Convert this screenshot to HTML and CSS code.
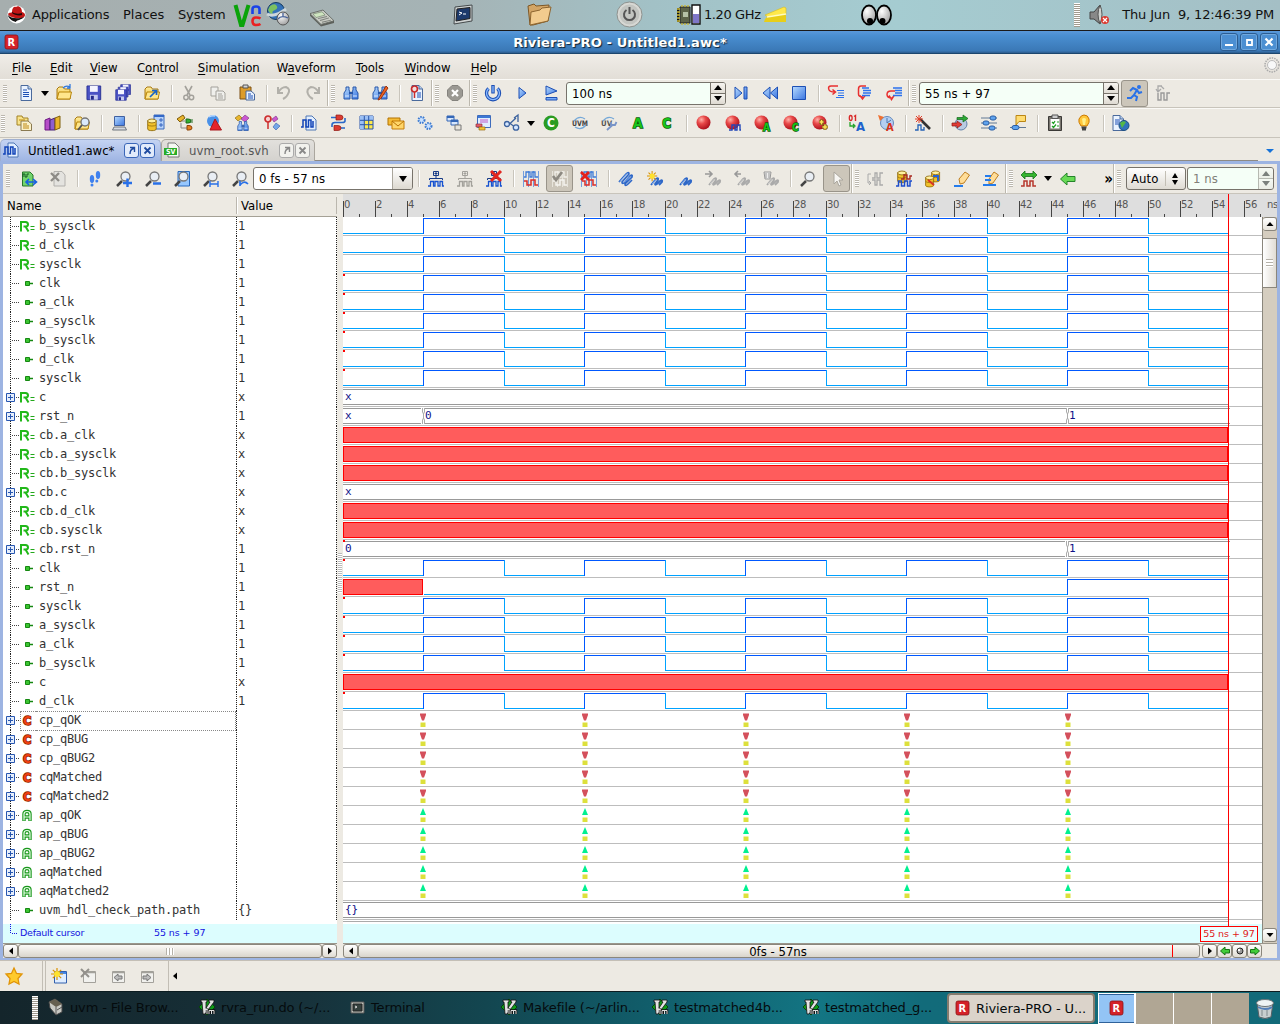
FILE: index.html
```html
<!DOCTYPE html>
<html lang="en">
<head>
<meta charset="utf-8">
<title>Riviera-PRO - Untitled1.awc*</title>
<link rel="stylesheet" href="styles.css">
</head>
<body>
<svg width="0" height="0" class="defs">
  <defs>
    <linearGradient id="gb" x1="0" y1="0" x2="1" y2="1"><stop offset="0" stop-color="#b8dcff"/><stop offset="1" stop-color="#3a75e0"/></linearGradient>
    <linearGradient id="gy" x1="0" y1="0" x2="0" y2="1"><stop offset="0" stop-color="#fff0a0"/><stop offset="1" stop-color="#eeb22c"/></linearGradient>
    <radialGradient id="gr" cx=".35" cy=".3" r=".75"><stop offset="0" stop-color="#ffb0a8"/><stop offset=".4" stop-color="#e84848"/><stop offset="1" stop-color="#a80c18"/></radialGradient>
    <radialGradient id="gw" cx=".35" cy=".3" r=".8"><stop offset="0" stop-color="#fff"/><stop offset="1" stop-color="#999"/></radialGradient>
  </defs>
</svg>
<div class="panel">
  <span class="pic p-hat" data-icon="redhat"></span>
  <span class="p-app">Applications</span><span class="p-places">Places</span><span class="p-sys">System</span>
  <span class="pic p-vnc" data-icon="vnc"></span><span class="pic p-globe" data-icon="globe"></span>
  <span class="pic p-calc" data-icon="calc"></span><span class="pic p-term" data-icon="pterm"></span>
  <span class="pic p-fold" data-icon="pfolder"></span><span class="pic p-power" data-icon="ppower"></span>
  <span class="pic p-chip" data-icon="chip"></span><span class="p-ghz">1.20 GHz</span>
  <span class="pic p-note" data-icon="note"></span><span class="pic p-eyes" data-icon="eyes"></span>
  <span class="p-grip"></span><span class="pic p-spk" data-icon="speaker"></span>
  <span class="p-clock">Thu Jun&nbsp; 9, 12:46:39 PM</span>
</div>
<div class="title">
  <span class="pic t-logo" data-icon="rlogo"></span>
  <span class="t-text">Riviera-PRO - Untitled1.awc*</span>
  <span class="wbtns"><b data-icon="wmin"></b><b data-icon="wmax"></b><b data-icon="wclose"></b></span>
</div>
<nav class="menu">
  <span class="m1"><u>F</u>ile</span><span class="m2"><u>E</u>dit</span><span class="m3"><u>V</u>iew</span><span class="m4">C<u>o</u>ntrol</span><span class="m5"><u>S</u>imulation</span><span class="m6">W<u>a</u>veform</span><span class="m7"><u>T</u>ools</span><span class="m8"><u>W</u>indow</span><span class="m9"><u>H</u>elp</span>
  <i class="gear" data-icon="gear"></i>
</nav>
<div class="tb tb1">
  <span class="icons" data-items="grip new drop open save saveall ofolder | cut copy paste | undo redo group find findrep | bookmark group stop group power play flag"></span>
  <span class="spin s1"><span class="val">100 ns</span><em></em></span>
  <span class="icons" data-items="next rew square | stepin stepover stepout group"></span>
  <span class="spin s2"><span class="val">55 ns + 97</span><em></em></span>
  <span class="icons" data-items="*runner wavesync"></span>
</div>
<div class="tb tb2">
  <span class="icons" data-items="grip docs books fsearch | laptop | dbprops tree shapes hfind hpin | wavedoc plug grid mail gears cascade memo objs drop ccircle uvm uvmw alet clet | ball ballw balla ballc ballp | o1a clocka | wand | goball sliders callout | clip bulb | docglobe"></span>
</div>
<div class="tabs">
  <div class="tab on"><i data-icon="wavedoc"></i><span>Untitled1.awc*</span><b data-icon="detach"></b><b data-icon="tclose"></b></div>
  <div class="tab off"><i data-icon="svdoc"></i><span>uvm_root.svh</span><b data-icon="detach"></b><b data-icon="tclose"></b></div>
  <div class="tabdrop"></div>
</div>
<div class="frame">
  <div class="tb tb3">
    <span class="icons" data-items="grip addwave delwave | feet zin zout zfit zrange zundo"></span>
    <span class="combo"><span>0 fs - 57 ns</span><em></em></span>
    <span class="icons" data-items="| tree1 tree2 tree3 | wavall *wavchk wavdel | clip1 clip2 clip3 clip4 clip5 clip6 | lens *cursor group wavecmp dbwave dbcmp eraser eraser2 group edges drop left"></span>
    <span class="more">»</span><span class="icons grp" data-items="group"></span>
    <span class="auto"><span>Auto</span><em></em></span>
    <span class="spin s3"><span class="val">1 ns</span><em></em></span>
  </div>
  <div class="head"><span class="h-name">Name</span><span class="h-value">Value</span><span class="h-end"></span><div class="ruler" id="ruler"></div></div>
  <div class="body">
    <div class="left"><div class="signals" id="signals"></div>
      <div class="defcur"><span>Default cursor</span><span class="dval">55 ns + 97</span></div>
      <div class="hs"><b data-icon="sl"></b><span class="thumb"><i></i></span><b data-icon="sr"></b></div>
    </div>
    <div class="gutter"><i></i></div>
    <div class="right">
      <div class="wavearea"><div><div class="waves" id="waves"></div><div class="wcur"></div></div>
        <div class="vs"><b data-icon="su"></b><span class="vthumb"><i></i></span><span class="vfill"></span><b data-icon="sd"></b></div>
      </div>
      <div class="hs hs2"><b data-icon="sl"></b><span class="thumb">0fs - 57ns<s></s></span><b class="next" data-icon="sr"></b><b data-icon="gl"></b><b data-icon="dot"></b><b data-icon="grr"></b></div>
      <div class="cursor"></div><div class="curlabel">55 ns + 97</div>
    </div>
  </div>
</div>
<div class="bottom">
  <span class="b1"><i data-icon="star"></i></span>
  <span class="b2"><i data-icon="newwin"></i><i data-icon="delwin"></i><i data-icon="prevwin"></i><i data-icon="nextwin"></i></span>
  <span class="b3" data-icon="sl"></span>
</div>
<div class="task">
  <span class="tgrip"></span>
  <div class="titem"><i data-icon="cabinet"></i>uvm - File Brow...</div>
  <div class="titem"><i data-icon="vim"></i>rvra_run.do (~/...</div>
  <div class="titem"><i data-icon="tterm"></i>Terminal</div>
  <div class="titem"><i data-icon="vim"></i>Makefile (~/arlin...</div>
  <div class="titem"><i data-icon="vim"></i>testmatched4b...</div>
  <div class="titem"><i data-icon="vim"></i>testmatched_g...</div>
  <div class="tact"><i data-icon="rlogo"></i>Riviera-PRO - U...</div>
  <div class="pager"><span><i data-icon="rlogo"></i></span><span></span><span></span><span></span></div>
  <i class="trash" data-icon="trash"></i>
</div>
<script src="app.js"></script>
</body>
</html>
```
FILE: styles.css
```css
*{box-sizing:border-box}
body{margin:0;width:1280px;height:1024px;overflow:hidden;background:#edeae3;font-family:"DejaVu Sans Condensed","DejaVu Sans",sans-serif;font-stretch:condensed;font-size:13px;color:#000}
.defs{position:absolute}
svg{display:block;overflow:visible}
i,em,b{font-style:normal;font-weight:normal}
.panel{height:31px;background:linear-gradient(90deg,#a6aeae 0,#a5b3b5 35%,#a2c1c6 51%,#a5ccd1 70%,#a4bfc5 100%);border-bottom:1px solid #1a1a1a;display:flex;align-items:center;font-family:"DejaVu Sans",sans-serif;font-stretch:normal;font-size:13px;color:#111;white-space:nowrap;padding-bottom:1px}
.panel>span{flex:none}
.p-hat{width:25px;padding-left:7px}.p-app{margin-left:7px;width:91px;letter-spacing:-.18px}.p-places{width:55px}.p-sys{width:56px;letter-spacing:-.15px}
.p-vnc{width:32px}.p-globe{width:44px}.p-calc{width:143px;padding-top:6px}.p-term{width:74px}.p-fold{width:89px}.p-power{width:61px}.p-chip{width:27px}.p-ghz{width:60px;letter-spacing:-.4px}.p-note{width:97px}.p-eyes{width:213px}
.p-grip,.tgrip{width:6px;height:24px;background:repeating-linear-gradient(#fff 0 1px,#a09a8e 1px 2px)}
.p-spk{width:34px;padding-left:9px;margin-right:0}.p-clock{letter-spacing:-.15px;width:160px;text-align:right}
.title{height:23px;background:linear-gradient(#5a98da,#4a8fd2 20%,#3a78b6 90%,#2c5b8c);border-bottom:1px solid #1c466e;display:grid;grid-template-columns:20px 1fr 60px;align-items:center}
.t-logo{padding-left:5px}
.t-text{text-align:center;color:#fff;font:bold 13px "DejaVu Sans",sans-serif;text-shadow:1px 1px 1px #123;letter-spacing:.12px}
.wbtns{display:flex;gap:2px}
.wbtns b{width:18px;height:18px;border:1px solid #2c5d92;border-radius:3px;display:grid;place-items:center;background:#4c8fd2;box-shadow:inset 0 0 0 1px #70a8de}
.menu{height:25px;display:flex;align-items:center;background:linear-gradient(#f0ede8,#e2ded7);padding-left:12px;padding-top:2px}
.menu span{letter-spacing:-.05px}
.menu u{text-underline-offset:2px}
.m1{width:38px}.m2{width:40px}.m3{width:47px}.m4{width:61px}.m5{width:79px}.m6{width:79px}.m7{width:49px}.m8{width:66px}.m9{width:794px}
.gear{margin-top:-6px}
.tb{display:flex;align-items:center;border-top:1px solid #faf9f6;border-bottom:1px solid #c8c4bb;flex:none}
.tb1{height:29px;padding-left:3px;padding-bottom:1px}.tb2{height:30px;padding-left:1px}.tb3{height:30px;padding-left:3px;border-top:0}
.icons{display:flex;align-items:center;align-self:stretch;flex:none}
.ib{width:29px;height:27px;display:grid;place-items:center;flex:none}
.ib.on{width:27px;margin:0 1px;border:1px solid #99948a;border-radius:3px;background:#ccc6ba}
.sep{width:8px;height:17px;border-left:1px solid #c9c5bc;box-shadow:inset 1px 0 #fff;margin-left:5px;margin-right:-5px}
.grip{width:8px;display:flex;flex:none}
.group{width:9px;align-self:stretch;border-left:1px solid #bcb8ae;box-shadow:inset 1px 0 #fff;padding-left:3px;display:flex;align-items:center;flex:none}
.grip:after,.group:after{content:"";width:4px;height:17px;background:repeating-linear-gradient(#bbb7ae 0 1px,#fff 1px 2px)}
.grp{margin-right:4px}
.drop{width:10px;display:grid;place-items:center;flex:none}
.drop:after{content:"";border:4.5px solid transparent;border-top:5px solid #000;border-bottom:0}
.spin,.combo,.auto{height:23px;border:1px solid #77736b;border-radius:3px;background:#f5fff7;display:flex;flex:none;overflow:hidden;letter-spacing:.1px}
.val,.combo>span{flex:1;padding:3px 0 0 5px;line-height:15px}
.spin em{width:15px;border-left:1px solid #77736b;background:linear-gradient(#f6f4ef,#e2ded6 48%,#77736b 48% 52%,#f6f4ef 52%,#dedad2);display:flex;flex-direction:column;justify-content:space-around;align-items:center}
.spin em:before{content:"";border:4px solid transparent;border-bottom:5px solid #000;border-top:0}
.spin em:after{content:"";border:4px solid transparent;border-top:5px solid #000;border-bottom:0}
.s1{width:160px;margin-left:1px}.s2{width:200px;margin:0 1px 0 2px}.s3{width:87px;color:#808078;margin-left:1px}.s3 em{filter:opacity(.5)}
.combo{width:160px;background:#fff;margin:0 0 0 -1px}
.combo em{width:20px;border-left:1px solid #aaa69c;background:linear-gradient(#fff,#ddd9d0);display:grid;place-items:center}
.combo em:after{content:"";border:4.5px solid transparent;border-top:6px solid #000;border-bottom:0}
.auto{width:60px;background:linear-gradient(#fff,#dfdbd3);padding:3px 0 0 4px;line-height:15px}
.auto em{margin-left:6px;border-left:1px solid #c2beb4;padding-left:6px;display:flex;flex-direction:column;gap:2px;justify-content:center;height:15px}
.auto em:before{content:"";border:3.5px solid transparent;border-bottom:5px solid #000;border-top:0}
.auto em:after{content:"";border:3.5px solid transparent;border-top:5px solid #000;border-bottom:0}
.more{width:31px;text-align:right;font-size:15px;font-weight:bold;line-height:20px}
.tabs{height:23px;display:flex;align-items:stretch;padding:1px 0 0 0;background:#edeae3}
.tab{display:flex;align-items:center;border:1px solid #aaa69e;border-bottom:0;border-radius:5px 5px 0 0;flex:none;padding-bottom:1px}
.tab.on{width:161px;background:linear-gradient(#c4d3f2,#9fb5e3);padding-left:2px;border-color:#a0b0d0}
.tab.off{width:154px;background:linear-gradient(#e2e0dc,#d4d2ce);color:#555;padding-left:2px}
.tab span{margin-left:9px;white-space:nowrap}
.tab.on span{width:96px}.tab.off span{width:90px;letter-spacing:.05px}
.tab b{width:15px;height:15px;border:1px solid #3a66b8;border-radius:3px;background:#e2ebfb;display:grid;place-items:center;margin-right:1px;color:#1f4ba0}
.tab.off b{border-color:#aaa;background:#f2f2ee;color:#888;margin-right:1px}
.tabdrop{flex:1;border-bottom:1px solid #8e8a84;margin-right:22px;position:relative}
.tabdrop:after{content:"";position:absolute;right:-16px;top:10px;border:4.5px solid transparent;border-top:4.5px solid #1672d8;border-bottom:0}
.frame{height:799px;border:3px solid #9db4e2;border-left-width:3px;border-bottom-width:2px;display:flex;flex-direction:column;overflow:hidden}
.head{height:23px;display:flex;align-items:center;flex:none;background:#edeae3}
.h-name{width:233px;padding-left:4px}.h-value{width:100px;border-left:1px solid #bbb7ae;padding-left:4px;line-height:17px;box-shadow:inset 1px 0 #fff}.h-end{width:7px;height:17px;border-left:1px solid #bbb7ae}
.ruler{width:934px;height:23px;background:#dedede}
.ruler text{font:10px "DejaVu Sans","DejaVu Sans",sans-serif;font-stretch:normal;fill:#555;letter-spacing:-.4px}
.body{display:flex;flex:1;min-height:0}
.left{width:334px;display:flex;flex-direction:column;background:#fff;flex:none}
.signals{height:707px;font:12px "DejaVu Sans Mono",monospace;letter-spacing:-.22px;color:#333;box-shadow:0 -1px #a5a196}
.sig{height:19px;display:grid;grid-template-columns:17px 16px 200px 101px;background:repeating-linear-gradient(#222 0 1px,#fff 1px 2px) 7px 0/1px 100% no-repeat,repeating-linear-gradient(#222 0 1px,#fff 1px 2px) 233px 0/1px 100% no-repeat,repeating-linear-gradient(#222 0 1px,#fff 1px 2px) 333px 0/1px 100% no-repeat,repeating-linear-gradient(90deg,#444 0 1px,#fff 1px 2px) 9px 9px/7px 1px no-repeat;line-height:19px}
.sig>span:nth-child(3){padding-left:3px}.sig>span:nth-child(4){padding-left:2px}
.sig svg{margin-top:1px}
.sig.sel span:nth-child(2){border:1px dotted #888;border-right:0}.sig.sel span:nth-child(3){border:1px dotted #888;border-left:0;line-height:17px}
.sig.sel span:nth-child(2) svg{margin-top:0;margin-left:-1px}
.defcur{height:19px;background:repeating-linear-gradient(#1414e0 0 1px,#dcfdfe 1px 2px) 7px 0/1px 10px no-repeat,repeating-linear-gradient(90deg,#1414e0 0 1px,#dcfdfe 1px 2px) 7px 9px/8px 1px no-repeat,#dcfdfe;color:#1414e0;font:9.5px/18px "DejaVu Sans",sans-serif;font-stretch:normal;display:flex;padding-left:17px;letter-spacing:-.25px}
.defcur span{width:134px}.defcur .dval{letter-spacing:-.08px}
.hs{height:15px;display:flex;background:#edeae3;border-top:1px solid #9a968c}
.hs b{width:15px;border:1px solid #8a867c;border-radius:3px;background:linear-gradient(#fff,#e0dcd3);display:grid;place-items:center;flex:none}
.hs .thumb{flex:1;border:1px solid #8a867c;border-radius:3px;background:linear-gradient(#fcfaf7,#d9d5cc);display:flex;justify-content:center;align-items:center;line-height:11px;position:relative}
.hs .thumb i{width:8px;height:7px;background:repeating-linear-gradient(90deg,#b5b1a8 0 1px,#fff 1px 3px)}
.gutter{width:6px;background:#edeae3;display:flex;align-items:center;flex:none}
.gutter i{width:4px;height:40px;margin:-30px 0 0 1px;background:repeating-linear-gradient(#bbb 0 1px,#fff 1px 2px)}
.right{width:934px;display:flex;flex-direction:column;position:relative}
.wavearea{height:726px;display:grid;grid-template-columns:919px 15px}
.waves{height:707px;background:#fff;overflow:hidden}
.waves svg{overflow:hidden}
.waves text{font:11px "DejaVu Sans Mono",monospace;fill:#101088}
.wcur{height:19px;background:#dcfdfe}
.vs{display:flex;flex-direction:column;background:#d5cdbf;border-left:1px solid #8a867c;align-items:stretch}
.vs b{height:14px;border:1px solid #8a867c;border-left:0;border-radius:3px;background:linear-gradient(#fff,#e8e4dc);display:grid;place-items:center}
.vs b:last-child{margin-bottom:1px}
.vthumb{height:50px;margin-top:7px;border:1px solid #8a867c;border-left:0;background:linear-gradient(90deg,#fff,#e0dcd4);display:grid;place-items:center}
.vthumb i{width:7px;height:8px;background:repeating-linear-gradient(#b5b1a8 0 1px,#fff 1px 3px)}
.vfill{flex:1}
.hs2{padding-right:15px}
.hs2 .next{margin-left:2px}
.hs2 .thumb{padding-right:2px}
.hs2 .thumb s{position:absolute;left:813px;top:0;width:1px;height:12px;background:#f00}
.cursor{position:absolute;left:885px;top:-23px;width:1px;height:732px;background:#f00}
.curlabel{position:absolute;left:857px;top:709px;width:58px;height:16px;border:1px solid #f00;background:#ecfeff;color:#e01818;font:9.5px/13px "DejaVu Sans",sans-serif;font-stretch:normal;text-align:center;letter-spacing:-.05px}
.bottom{height:31px;display:flex;border-top:1px solid #c4bfb6}
.b1{width:43px;border-right:1px solid #c2beb5;display:flex;align-items:center;padding-left:5px}
.b2{width:124px;margin-left:2px;border-left:1px solid #c2beb5;border-right:1px solid #c2beb5;display:flex;align-items:center;gap:13px;padding-left:5px}
.b3{padding:9px 0 0 0}
.task{height:33px;border-top:1px solid #0c1c20;background:linear-gradient(90deg,#14252b 0,#17323b 24%,#134650 38%,#115c69 50%,#137583 64%,#126b7a 72%,#126a79);display:flex;align-items:center;font:13px "DejaVu Sans",sans-serif;font-stretch:normal;color:#050b0d;white-space:nowrap}
.tgrip{margin-left:32px;margin-right:10px}
.titem{width:151px;display:flex;align-items:center;gap:6px;flex:none;letter-spacing:-.15px;padding-bottom:2px}
.tact{width:148px;height:30px;background:#dbd3ca;border:2px solid #857b6e;border-radius:4px;display:flex;align-items:center;padding-left:7px;gap:7px;flex:none;margin-left:-7px;letter-spacing:-.1px}
.pager{display:flex;gap:1px;margin-left:3px;height:31px;background:#fff}
.pager span{width:37px;background:#b0a694;display:grid;place-items:center}
.pager span:first-child{background:#93c4f5;border:solid #2f629a;border-width:2px 0;outline:1px solid #fff;outline-offset:-1px}
.trash{margin-left:6px}
```
FILE: app.js
```js
// Icon artwork, drawn on a 16 x 16 grid unless a size is given.
const P = (d, f, s, w) => `<path d="${d}" fill="${f || 'none'}"${s ? ` stroke="${s}" stroke-width="${w || 1}"` : ''}/>`;
const T = (x, y, t, c, z, extra) => `<text x="${x}" y="${y}" fill="${c}" font-size="${z}" font-weight="bold" font-family="DejaVu Sans Condensed, DejaVu Sans" ${extra || ''}>${t}</text>`;
const BLUE = '#1c4fb4', GREY = '#a3a19b';
const doc = P('M3 .5H10L13.5 4V15.5H3Z', '#eaf3ff', '#4a6a9c') + P('M10 .5V4H13.5', '#b5cff0', '#4a6a9c');
const lens = (x) => P('M1 15L6 10', 'none', '#444', 2.5) + '<circle cx="9.5" cy="5.5" r="4.5" fill="#e9eef4" stroke="#777" stroke-width="1.3"/>' + (x || '');
const ball = (x) => '<circle cx="7.5" cy="7.5" r="7" fill="url(#gr)"/>' + (x || '');
const wave = (y, c) => P(`M0 ${y + 5}H2.5V${y}H5.5V${y + 5}H8.5V${y}H11.5V${y + 5}H14V${y}H16`, 'none', c, 1.5);
const folder = P('M1 4L3 2H7L8.5 4H14V14H1Z', 'url(#gy)', '#a87810') + P('M1 14L3 7H15.5L14 14Z', '#ffe68c', '#b8860b');
const copyDoc = (c, f) => P('M1 2H8V11H1Z', f, c) + P('M6 6H13L15 8V15H6Z', f, c) + P('M8 9H12M8 11H13M8 13H13', 0, c);
const disk = (x, y, s) => `<g transform="translate(${x} ${y}) scale(${s})">` + P('M1 1H15V15H1Z', '#4a52c4', '#2c3396') + P('M4 1H12V7H4Z', '#f4f4ff') + P('M4 10H12V15H4Z', '#c6caee') + P('M5 11H8V15H5Z', '#23298a') + '</g>';
const bino = (c) => P('M3 2H6V5L7 7V14H1V8L3 5ZM10 2H13V5L15 8V14H9V7L10 5Z', 'url(#gb)', c) + P('M6 8H10', 0, c, 2) + P('M2 11H6M10 11H14', 0, '#dcebff');
const letter = (t, x, y, z) => T(x, y, t, '#19c519', z, 'stroke="#0a5a0a" stroke-width="1.4" paint-order="stroke"');
const db = P('M2 3V13C2 15.5 12 15.5 12 13V3Z', '#f1c22c', '#8a6508') + '<ellipse cx="7" cy="3.5" rx="5" ry="2.3" fill="#fff0a0" stroke="#8a6508"/>' + P('M2 8C3 10 11 10 12 8', 0, '#9a7208');
const treeWave = (c, w, x) => P('M5.5 .5H10.5V4.5H5.5ZM8 4.5V7M1.500 9V7.500H14.500V9M6.5 2.500H9.5M8 1V4', 'none', c) + P('M0 15H2.500V10.500H5.500V15H7V10.500H10V15H12V10.500H14.500V15H16', 0, w || c, 1.3) + (x || '');
const waveGrid = (a, b) => P('M0.500 0V16M15.500 0V16M5.500 0V16M10.500 0V16', 0, a, .7) + P('M1 6H3V1H7V6H9V1H12V6H15', 0, a, 1.3) + P('M1 10H4V14H8V9H12V14H15', 0, b, 1.5);
const clips = (c, f, x) => P('M1 11L8 3Q11 0 11 3L4 11Q4 14 7 11L12 5Q15 3 14 6L7 13Q7 16 10 13L14 9', 0, c, 1.7) + (f ? P('M2 10.500L9 2.500M6 11.500L12 5.500', 0, f, .7) : '') + (x || '');
const smallClip = (c, f) => P('M4 14L9 8Q12 6 11 9L8 13Q8 15 11 12L13 10Q16 8 15 11L12 14', 0, c, 1.8) + P('M5 13L9.500 8', 0, f, .7);
const sunburst = P('M6 0V12M0 6H12M1.8 1.8L10.2 10.2M10.2 1.8L1.8 10.2', 0, '#d99000', 1.2) + '<circle cx="6" cy="6" r="3" fill="#ffe22c"/>';
const win = (c) => P('M3.5 3.5H15.5V14.5H3.5Z', '#f1f1ee', c) + P('M4 4.5H15', 0, c, 1.5);
const X = (x, y, r, c, w) => P(`M${x} ${y}l${r} ${r}M${x + r} ${y}l${-r} ${r}`, 0, c, w);
const cyl = (x, y, c) => P(`M${x} ${y}h6v3h-6z`, c, '#555', .6);

const ICONS = {
  redhat: [19, '<circle cx="9.5" cy="9.5" r="9" fill="#fff"/><path d="M1 9C2 7 5 8 5 7C5 3 7 1 9 2C11 0 15 2 15 7C19 8 19 12 15 13C9 14 2 12 1 9Z" fill="#c11616"/><path d="M1 10C4 14 12 14 17 12C15 15 9 15 9 17C5 16 1 13 1 10Z" fill="#111"/><path d="M5 7C8 9 12 9 15 8V10C12 11 7 10 5 8Z" fill="#220808"/>'],
  vnc: [28, P('M1.500 4L7 24H8.500L14.500 4', 0, '#0aa30a', 4) + P('M18.500 13V8Q18.500 5.500 22 5.500Q25.500 5.500 25.500 8V13', 0, '#1a42e8', 2.6) + P('M26.500 17.500Q25 16.500 22 16.500Q18.500 16.500 18.500 20Q18.500 24 22 24Q25 24 26.500 23', 0, '#ea2222', 2.6)],
  globe: [25, '<circle cx="10" cy="9" r="8.5" fill="#3472b8" stroke="#163a60"/>' + P('M4 4Q8 1 10 3Q13 6 9 8Q5 9 7 13Q3 11 2 8Z', '#7cc060') + P('M1 12Q8 16 20 7', 0, '#cdd6da', 3) + '<ellipse cx="17" cy="16.500" rx="6" ry="6.500" fill="url(#gw)" stroke="#555"/>' + P('M12 17Q15 13 22 16M17 11V15', 0, '#46629a', 1.3)],
  calc: [25, '<g transform="translate(0 1) scale(1 .72)">' + P('M0 5L11 20V23L0 8ZM11 20L24 15V18L11 23Z', '#5d605b') + P('M0 5L13 0L24 15L11 20Z', '#c9cbc4', '#60645e') + P('M3 5.500L12 2.500L15 7L6 10.500Z', '#cfe5c0', '#768870', .8) + P('M8 12L17 9M10 14.500L19 11M12 17L21 14', 0, '#7d817b', 1.300) + '</g>', 18],
  pterm: [20, P('M2 2L19 0V16L1 19Z', '#cfd3d3', '#454a4c') + P('M4 4L17 2.500V13.500L3 16Z', '#1d3a6c', '#222') + P('M6 7L9 8L6 10M10 9H13', 0, '#fff')],
  pfolder: [24, P('M1 3L7 1L9 3L22 2L21 18L6 22H3Z', '#d3a566', '#7d5726') + P('M3 22L4 9L13 7L15 5L24 4L21 18Z', '#f2cb8e', '#8d6530')],
  ppower: [27, '<circle cx="13.500" cy="13.500" r="12.500" fill="#d7d8d4" stroke="#8e928f"/><circle cx="13.500" cy="13.500" r="10" fill="#c3c5c1"/>' + P('M10.500 9A5.500 5.500 0 1 0 16.500 9M13.500 6V13', 0, '#555', 2)],
  chip: [24, P('M3 3H13V19H3Z', '#5d6348', '#222') + P('M1 4V18', 0, '#111', 2) + P('M0 5H3M0 8H3M0 11H3M0 14H3M0 17H3M5 1V3M8 1V3M11 1V3M5 19V21M8 19V21M11 19V21', 0, '#c9b52e', 1.3) + P('M6 8H11V13H6Z', '#b6c1a5') + P('M15 1H23V20H15Z', '#fff', '#111', 1.4) + P('M16 10H22V19H16Z', '#7e76c8'), 21],
  note: [24, P('M1 12L4 9L22 7V15H0Z', '#e8ce18') + P('M1 8L20 0L22 1V7L4 10Z', '#ffe84a', '#d8bc18', .6) + P('M3 10L22 7', 0, '#fffcc0', 1.3), 16],
  eyes: [31, '<ellipse cx="8" cy="10" rx="7" ry="9.500" fill="url(#gw)" stroke="#000" stroke-width="1.8"/><ellipse cx="23" cy="10" rx="7" ry="9.500" fill="url(#gw)" stroke="#000" stroke-width="1.800"/><circle cx="9" cy="16" r="3" fill="#000"/><circle cx="21.500" cy="16" r="3" fill="#000"/>', 20],
  speaker: [20, P('M1 7H5L11 0V19L5 14H1Z', '#888', '#444') + P('M11 0Q15 9 11 19Q7 9 11 0', '#cfd2cf', '#555') + '<circle cx="16" cy="15" r="4" fill="#dc3a30"/>' + X(14, 13, 4, '#fff', 1.2)],
  rlogo: [13, '<rect width="13" height="14" rx="2" fill="#d42229" stroke="#8c1418" stroke-width=".8"/>' + T(2.5, 11, 'R', '#fff', 11), 14],
  wmin: [10, P('M1 8H9', 0, '#fff', 2)], wmax: [10, P('M3 3H8V8H3Z', 0, '#fff', 1.8)], wclose: [10, X(1.5, 1.5, 7, '#fff', 2.2)],
  gear: [16, '<circle cx="8" cy="8" r="7" fill="none" stroke="#aaa" stroke-width="1.5" stroke-dasharray="1.5 1"/><circle cx="8" cy="8" r="4.500" fill="#f8f8f8" stroke="#bbb"/>'],
  new: [16, doc + P('M5 5H9M5 7.500H11M5 9.500H11M5 11.500H11', 0, BLUE)],
  open: [17, folder + P('M7 3Q10 0 14 2M14 -1V3H11', 0, '#3078dd', 1.3)],
  save: [16, disk(0, 0, .98)],
  saveall: [16, disk(5, -1, .7) + disk(2.5, 1.500, .7) + disk(0, 4, .75)],
  ofolder: [16, folder + P('M6 12L12 6M8 5.500H12.500V10', 0, '#1964c8', 1.7)],
  cut: [16, P('M4 1L9 10M11 1L6 10', 0, GREY, 1.6) + '<circle cx="5" cy="12.500" r="2.200" fill="none" stroke="#a3a19b" stroke-width="1.500"/><circle cx="10.500" cy="12.500" r="2.200" fill="none" stroke="#a3a19b" stroke-width="1.500"/>'],
  copy: [16, copyDoc(GREY, '#efefec')],
  paste: [16, P('M1 2H12V14H1Z', '#dd9c2b', '#7c5014') + P('M4 0H9V3H4Z', '#d5d5d5', '#555') + P('M7 6H12L15.500 9V15H7Z', '#e8f2ff', '#47679b') + P('M9 9H12M9 11H14M9 13H14', 0, BLUE)],
  undo: [16, P('M2 2V8H7M2 8Q5 2 10 2Q15 4 12 9Q11 12 7 14', 0, '#b2b0aa', 2)],
  redo: [16, P('M14 2V8H9M14 8Q11 2 6 2Q1 4 3 9Q4 12 8 14', 0, '#b2b0aa', 2)],
  find: [16, bino('#2857a8')],
  findrep: [16, bino('#2857a8') + P('M14 1L7 13L6 15L8.500 14L16 3Z', '#ee6420', '#9c320c')],
  bookmark: [16, doc + P('M8 8H12M8 10H12M8 12H12', 0, BLUE) + '<circle cx="5.500" cy="4" r="3" fill="#f0dede" stroke="#c92b2b" stroke-width="1.700"/>' + P('M5.500 7V13', 0, '#c92b2b', 1.5)],
  stop: [16, P('M5 .5H11L15.500 5V11L11 15.500H5L.5 11V5Z', '#9b9993', '#85837e') + X(5, 5, 6, '#fff', 2.2)],
  power: [16, P('M3.500 3.500A6.500 6.500 0 1 0 12.500 3.500M8 0V8.500', 0, BLUE, 3.4) + P('M3.500 3.500A6.500 6.500 0 1 0 12.500 3.500M8 1V7.500', 0, '#8abaff', 1.3)],
  play: [16, P('M5 2.500L12 8L5 13.500Z', 'url(#gb)', BLUE)],
  flag: [16, P('M3 1L14 6L3 10Z', 'url(#gb)', BLUE) + P('M3 12.500H14V15H3Z', '#75aaf8', BLUE)],
  next: [16, P('M2 2L9 8L2 14ZM11 2H14V14H11Z', 'url(#gb)', BLUE)],
  rew: [16, P('M8 2V14L1 8ZM15.500 2V14L8.500 8Z', 'url(#gb)', BLUE)],
  square: [16, P('M1.500 1.500H14.500V14.500H1.500Z', 'url(#gb)', BLUE)],
  stepin: [16, P('M10 1H3Q0 1 .7 4Q1 7 7 7M4.500 4.500L7.500 7L4.500 9.500', 0, '#e83030', 1.5) + P('M9 5.500H16M10 8H16M10 10.500H16M8 12.500H16', 0, '#2b72ee', 1.2)],
  stepover: [16, P('M9 1H4Q1.500 1 1.500 4V9Q1.500 12 6 12M3 10.500L5.500 14L8 10.500', 0, '#e83030', 1.5) + P('M5 3H12M6 5.500H14M6 8H14M5 10.500H13', 0, '#2b72ee', 1.3)],
  stepout: [16, P('M9 6H5Q1 6 1 9.500Q1 13 6 13M3 10.500L5.500 14.500L8 10.500', 0, '#e83030', 1.5) + P('M7 3H16M9 5.500H16M9 8H16M7 10.500H16', 0, '#2b72ee', 1.3)],
  runner: [16, '<circle cx="12" cy="2" r="2" fill="#2a72e8"/>' + P('M3 6L6 3L10 5L7 10L10 12L9 16M7 10L4 13L0 13M10 5L12 8L15 7', 0, '#2a72e8', 2)],
  wavesync: [16, P('M6 1H2V6M0 4L2 7L5 4M5 1L8 4', 0, '#aaa', 1.3) + P('M2 8V15H5V8H8V15H11V8H14', 0, '#999', 1.4)],
  docs: [16, P('M1 1H6L7 3H12V10H1Z', '#f8e38a', '#a28224') + P('M6 6H12L15.500 9V15.500H5V6Z', '#fbf1c8', '#8a7a52') + P('M3 5H9M7 9H11M7 11H13M7 13H13', 0, '#bd8713')],
  books: [16, P('M0 5L5 3V15H0Z', '#b64dc8', '#6c1882') + P('M5 5L10 3V15H5Z', '#8d5fd0', '#492078') + P('M10 3L15 1V13L10 15Z', '#e8b52d', '#80610c')],
  fsearch: [16, folder + '<circle cx="11" cy="7" r="4" fill="#dbeafc" stroke="#777" stroke-width="1.400"/>' + P('M8 10L4 15', 0, '#555', 2)],
  laptop: [16, P('M3.500 1.500H13.500V10.500H3.500Z', 'url(#gb)', '#4060a0') + P('M3 12H14L15.500 15H1.500Z', '#d6dae2', '#70767e')],
  dbprops: [16, P('M6 0H16V14H6Z', '#b9d4fa', '#3d6abb') + P('M6 1H16', 0, '#3268c8', 2) + P('M12 4H14V6H12ZM12 9H14V11H12Z', 0, BLUE, .8) + `<g transform="translate(-2 3) scale(.85)">${db}</g>`],
  tree: [16, P('M4 8V13H10M4 6H8', 0, '#888') + P('M0 4L6 0L8 3L3 7Z', '#e8b52d', '#805c0c') + P('M9 4H11Q14 4 14 6Q14 8 11 8H9Z', '#30b030', '#1c6a1c') + P('M10 10.500H12Q15 10.500 15 13Q15 15 12 15H10Z', '#e88020', '#8c4408') + P('M13 5H16M13 7H16', 0, '#287028')],
  shapes: [16, '<circle cx="7" cy="6" r="6" fill="#4a91e8"/>' + P('M9 4L15.500 15H4Z', '#e5232c', '#ab161c') + P('M3 2Q6 0 9 1', 0, '#b8d8ff', 1.5)],
  hfind: [16, P('M0 3L4 0L7 3L3 6Z', '#e8b52d', '#80610c', .6) + P('M6 4L10 0L14 3L10 7Z', '#cb58d1', '#783080', .6) + `<g transform="translate(2 5) scale(.75)">${bino('#2857a8')}</g>`],
  hpin: [16, '<circle cx="4" cy="4" r="3" fill="#f7d0d0" stroke="#cc2d2d" stroke-width="1.700"/>' + P('M4 7V14', 0, '#cc2d2d', 1.5) + P('M8 4L12 1L14 4L10 7Z', '#cb58d1', '#783080', .6) + P('M9 12L12 8L16 11L12 15Z', '#75a7e8', '#355da8', .6)],
  wavedoc: [16, P('M5 1H11L15 5V15H5Z', '#e3efff', '#4f77b4') + P('M0 12H2V5H5V12H7.500V5H10V12H12V6', 0, '#1244b8', 1.5)],
  plug: [16, P('M1 2.500H9M15 3V6Q15 7.500 12 7.500H5Q2 7.500 2 10V12M11 13H15', 0, '#2968c8', 1.6) + P('M6 0H10Q13 0 13 2.500Q13 5 10 5H6Z', '#db3b32', '#8f1711', .7) + P('M4 10.500H8Q11 10.500 11 13Q11 15.500 8 15.500H4Z', '#db3b32', '#8f1711', .7)],
  grid: [16, P('M1 1H14V14H1Z', '#ffe94a', '#2855aa') + P('M1 1H5V14H1ZM5 1H14V5H5Z', '#9cc0f4') + P('M5.300 1V14M9.700 1V14M1 5.300H14M1 9.700H14', 0, '#2855aa')],
  mail: [16, P('M0 3H12V10H0Z', '#f5bc38', '#b37200') + P('M4 6H16V14H4Z', '#ffd66a', '#c57d08') + P('M4 6L10 11L16 6', 0, '#b97304')],
  gears: [16, '<circle cx="4.500" cy="5" r="3" fill="#c9e1ff" stroke="#3c7ad0" stroke-width="2" stroke-dasharray="1.500 1"/><circle cx="11.500" cy="11" r="3" fill="#c9e1ff" stroke="#3c7ad0" stroke-width="2" stroke-dasharray="1.500 1"/>'],
  cascade: [16, P('M1 1H8V6H1Z', '#d8e7fc', '#3467b7') + P('M5 5H12V10H5Z', '#d8e7fc', '#3467b7') + P('M9 10H15V15H9Z', '#e7e4dc', '#777') + P('M1 2H8M5 6H12', 0, '#3467b7', 2)],
  memo: [16, P('M2.500 .5H15.500V12.500H2.500Z', '#dfedff', '#3e6cbc') + P('M3 2H15', 0, '#3d77d5', 2) + P('M5 5H13M5 7H13', 0, '#c05bc6') + P('M1 9H7V12H1Z', '#e55b68', '#8c3040', .7) + P('M4 12H10V15H4Z', '#f5c332', '#986c10', .7)],
  objs: [16, '<circle cx="3" cy="9" r="2.500" fill="#d5e7ff" stroke="#3c629e" stroke-width="1.300"/><circle cx="12" cy="12.500" r="2.700" fill="#d5e7ff" stroke="#3c629e" stroke-width="1.300"/>' + P('M5 8Q7 9 9.500 11M5.500 9L12 3M10 3L14 0V7', 0, '#3c629e', 1.3)],
  ccircle: [16, '<circle cx="8" cy="8" r="7.500" fill="#2b9c22"/>' + T(4, 12.3, 'C', '#fff', 12)],
  uvm: [16, P('M2 6Q7 0 13 4M14 10Q9 16 3 12', 0, '#75a8d8', 1.3) + T(0, 11, 'UVM', '#444', 7.5, 'textLength="16" lengthAdjust="spacingAndGlyphs"')],
  uvmw: [16, P('M2 6Q7 0 13 4', 0, '#75a8d8', 1.3) + T(0, 11, 'UV', '#555', 7.5, 'textLength="11" lengthAdjust="spacingAndGlyphs"') + P('M6 15L12 9.500M10 7V10H14L15.500 7', 0, '#7894c8', 1.8)],
  alet: [16, letter('A', 3, 13, 14)], clet: [16, letter('C', 3.2, 13, 13.5)],
  ball: [16, ball()], ballw: [16, ball(P('M4 15H7V10H10V15H12V10H15V15H16', 0, '#2146b8', 1.4))],
  balla: [16, ball(letter('A', 9, 16, 10))], ballc: [16, ball(letter('C', 9, 16, 10))],
  ballp: [16, ball(P('M7 7H12M9.500 4.500V10M10 12H16M13 9V15', 0, '#7c5a10', 3) + P('M7.500 7H11.500M9.500 5V9.500M10.500 12H15.500M13 9.500V14.500', 0, '#ffe45a', 1.5))],
  o1a: [16, '<ellipse cx="1.700" cy="3" rx="1.400" ry="2.500" fill="none" stroke="#d92828" stroke-width="1.300"/>' + P('M5 1.500L6.500 .5V6', 0, '#d92828', 1.4) + P('M1 7V11H5M4 9L6 11L4 13', 0, '#25a22a', 1.3) + T(7, 15.500, 'A', '#2062cd', 13)],
  clocka: [16, '<circle cx="9" cy="8" r="6.500" fill="#b4cff2" stroke="#6388bb"/>' + P('M9 3V8L13 5', 0, '#4b75b0') + P('M0 0L6 2L2 6Z', '#ee7031') + T(8, 16, 'A', '#d83018', 11)],
  wand: [16, P('M5 4L15 14', 0, '#333', 2.6) + P('M4 0V8M0 4H8M1 1L7 7M7 1L1 7', 0, '#e23e28') + P('M0 15H3V10H6V15H9V12', 0, '#2462b5', 1.3)],
  goball: [16, '<circle cx="9" cy="9" r="6" fill="#b9cae2" stroke="#6382aa"/>' + P('M5 2.500H11V0L16 3.500L11 7V4.500H5Z', '#2daa35', '#176a1d', .7) + P('M0 8H5V6L10 9.500L5 13V11H0Z', '#e13d38', '#8c1715', .7)],
  sliders: [16, P('M0 3H16M0 8H16M0 13H16', 0, '#607894') + '<rect x="9" y="1" width="6" height="4" rx="2" fill="#5fa3ee" stroke="#2a5ea5"/><rect x="2" y="6" width="6" height="4" rx="2" fill="#5fa3ee" stroke="#2a5ea5"/><rect x="8" y="11" width="6" height="4" rx="2" fill="#5fa3ee" stroke="#2a5ea5"/>'],
  callout: [16, P('M6 .5H15.500V6.500H9L6 10Z', '#ffdc71', '#bb8615') + P('M0 12.500H16', 0, '#607894') + '<rect x="2" y="10.500" width="7" height="4" rx="2" fill="#5fa3ee" stroke="#2a5ea5"/>'],
  clip: [16, P('M1.500 1.500H14.500V15.500H1.500Z', '#77736c', '#3b3936') + P('M3.500 4H12.500V13.500H3.500Z', '#fff') + P('M5 0H11V3.500H5Z', '#ccc', '#555') + P('M5 7L6.500 8.500L8 6M5 11L6.500 12.500L9 9.500M10 7H12M10 11H12', 0, '#20a025', 1.2)],
  bulb: [16, P('M5 11Q2 7 3 4Q5 0 8 0Q12 0 13 4Q14 7 11 11Z', '#ffc73b', '#cb7900') + P('M6 4Q8 2 10 4L9 10H7Z', '#fff08a') + P('M5.500 12.500H10.500M6 14.500H10', 0, '#444', 2)],
  docglobe: [16, `<g transform="translate(-3 0)">${doc}</g>` + P('M2 5H7M2 7H7M2 9H6', 0, BLUE) + '<circle cx="11" cy="10.500" r="5" fill="#3174bb" stroke="#194c80"/>' + P('M7 8Q10 5 13 7L11 10L9 13Z', '#55b946')],
  svdoc: [16, P('M4 1H11L15 5V15H4Z', '#f4f8f2', '#777') + P('M0 6H13V13H0Z', '#28ac28') + T(2, 12, 'SV', '#fff', 7)],
  detach: [9, P('M3 8Q3 3 7 2.500M3 1.500H7.500V6', 0, 'currentColor', 1.4)], tclose: [9, X(1.5, 1.5, 6, 'currentColor', 1.8)],
  addwave: [16, P('M1.500 1H9L12 4V15H1.500Z', '#72d46e', '#277629') + P('M2 6V3H4V6H6V3H8', 0, '#155c25') + P('M5 11H15M8 8L5 11L8 14M12 8L15.500 11L12 14', 0, '#1760e0', 1.6)],
  delwave: [16, `<g opacity=".5">${P('M4 .5H12L15 4V15H4Z', '#ddd', '#777')}</g>` + X(1, 2, 8, '#8d8b86', 2.3)],
  feet: [16, '<ellipse cx="11" cy="4" rx="2.200" ry="4" fill="#3e80ee"/><ellipse cx="9.800" cy="10" rx="1.500" ry="1.500" fill="#3e80ee"/><ellipse cx="5" cy="8" rx="2.200" ry="4" fill="#3e80ee"/><ellipse cx="5" cy="14" rx="1.500" ry="1.500" fill="#3e80ee"/>'],
  zin: [16, lens(P('M7 12H16M11.500 7.500V16', 0, '#2970e8', 2.4))],
  zout: [16, lens(P('M8 12.500H16', 0, '#2970e8', 2.5))],
  zfit: [16, P('M4 .5H15.500V15H4Z', '#96c7ff', '#2969bd') + lens()],
  zrange: [16, lens(P('M7 10V16M15 10V16M7 13H15', 0, '#2970e8', 1.4))],
  zundo: [16, lens(P('M8 15V10M8 14Q12 9 16 13', 0, '#2970e8', 1.7))],
  tree1: [16, treeWave('#163a86', '#1652d0')], tree2: [16, treeWave(GREY)], tree3: [16, treeWave('#163a86', '#1652d0', X(5, 0, 10, '#e32620', 3))],
  wavall: [16, waveGrid('#3e7bd8', '#d92d2a')], wavchk: [16, waveGrid('#f2f0ea', '#f5f4f0') + P('M1 5L4 9L10 1', 0, '#8d8981', 2.7)],
  wavdel: [16, waveGrid('#3e7bd8', '#d92d2a') + X(0, 1, 8, '#e3201b', 2.8)],
  clip1: [16, clips('#2d67c8', '#a5caff')], clip2: [16, smallClip('#2d67c8', '#a5caff') + `<g transform="scale(.85)">${sunburst}</g>`], clip3: [16, smallClip('#2d67c8', '#a5caff')],
  clip4: [16, smallClip('#aaa', '#ddd') + P('M0 3H6M4 0L7 3L4 6', 0, '#999', 1.6)], clip5: [16, smallClip('#aaa', '#ddd') + P('M1 3H7M4 0L1 3L4 6', 0, '#999', 1.6)],
  clip6: [16, smallClip('#aaa', '#ddd') + P('M1 1H8L7 8H2ZM3 2V7M6 2V7', '#eee', '#999')],
  lens: [16, lens()], cursor: [16, P('M5 1V13L8 10L10 15L12 14L10 9H14Z', '#f7f6f3', '#aaa69d')],
  wavecmp: [16, P('M4 3H1V12H4M2 10L4 12L2 14', 0, '#aaa') + P('M5 7H8V2H10V7H13V2H16M5 9H8V14H10V9H13V14H16', 0, '#aaa', 1.3)],
  dbwave: [16, `<g transform="translate(0 -1) scale(.85)">${db}</g>` + P('M5 8H8V4H11V8H14V5H16', 0, '#a82820', 1.4) + wave(10, '#1c4dcc')],
  dbcmp: [16, `<g transform="translate(5 -1) scale(.8)">${db}</g><g transform="translate(-1 4) scale(.8)">${db}</g>` + P('M8 5H13V10', 0, '#2964d3', 2) + P('M3 9L9 14', 0, '#d83227', 2)],
  eraser: [16, P('M5 8L11 1L15.500 4L10 12L6 13Z', '#ffdd98', '#bf7f21') + P('M0 15H9', 0, '#247cec', 2)],
  eraser2: [16, P('M6 8L11 1L15.500 4L10 12L6 13Z', '#ffdd98', '#bf7f21') + P('M2 5H8M2 9H8M0 14H13', 0, '#247cec', 1.8)],
  edges: [16, P('M0 4L4 0V2.500H12V0L16 4L12 8V5.500H4V8Z', '#35b52f', '#17711a', .8) + P('M0 15H3V10H6V15H9V10H12V15H15', 0, '#b6372c', 1.5)],
  left: [16, P('M.5 8L7 2V5.500H15V10.500H7V14Z', '#68da56', '#25842a')],
  sl: [12, P('M8 2.500V9.500L4 6Z', '#000')], sr: [12, P('M4 2.500V9.500L8 6Z', '#000')],
  su: [12, P('M2.500 8H9.500L6 4Z', '#000')], sd: [12, P('M2.500 4H9.500L6 8Z', '#000')],
  gl: [12, P('M1.500 6L6 2V4.500H10.500V8H6V10Z', '#40cc38', '#167016')], grr: [12, P('M10.500 6L6 2V4.500H1.500V8H6V10Z', '#40cc38', '#167016')], dot: [12, '<circle cx="6" cy="6" r="3" fill="#999" stroke="#222"/><circle cx="5" cy="5" r="1.200" fill="#fff"/>'],
  star: [18, P('M9 1L11.500 6.500L17 7L13 11.500L14 17L9 14.500L4 17L5 11.500L1 7L6.500 6.500Z', '#ffcb2c', '#e09408', 1.3)],
  newwin: [16, P('M3.500 3.500H15.500V15H3.500Z', '#dfedff', '#315fac') + P('M4 5H15', 0, '#4386e6', 2) + sunburst], delwin: [16, win(GREY) + X(1, 1, 8, '#93918c', 2)],
  prevwin: [16, win(GREY) + P('M5 9.500L9 6V8H13V11H9V13Z', '#bbb', '#777')], nextwin: [16, win(GREY) + P('M13 9.500L9 6V8H5V11H9V13Z', '#bbb', '#777')],
  cabinet: [16, P('M1 3L7 0L14 5V13L8 16L2 9Z', '#c9c9c4', '#444') + P('M1 3L7 0L14 5L8 8Z', '#655f50') + P('M8 8V16M9 11L14 8', 0, '#555')],
  vim: [16, P('M8 0L16 8L8 16L0 8Z', '#0f9a18', '#064609') + P('M2 1H8V3H7V9L11 3H10V1H15V3L6 15H4L3 3H2Z', '#e2e2e2', '#111', .8) + P('M8 11V15M10 15V11.500H12V15M12 11.500H15V15M8 9V10', 0, '#111', 2.4) + P('M8 11V15M10 15V11.500H12.500V15M12 11.500H15V15M8 9V10', 0, '#ddd', 1)],
  tterm: [15, P('M1 2H14V13H1Z', '#bfc1b9', '#555') + P('M3 4H12V11H3Z', '#35413e', '#222') + P('M5 6L7 7L5 8', 0, '#ddd')],
  trash: [20, P('M2 5L4 19Q10 22 16 19L18 5Z', '#c7cecf', '#556066') + '<ellipse cx="10" cy="5" rx="8.500" ry="3.500" fill="#eff4f4" stroke="#6b7579"/>' + P('M3 9Q10 13 17 9', 0, '#5580b8', 2) + P('M7 12V18M12 12V18', 0, '#7e898c')],
  // Signal tree icons
  reg: [15, P('M1 13.500V4H5.500Q8 4 8 6.500Q8 8.500 5.500 8.500H3.500M5.500 8.500L8.500 13.500', 0, '#22b81a', 2) + P('M10.500 8.500H14.500M10.500 11.500H14.500', 0, '#22a81a', 1), 18],
  net: [15, P('M5.500 6.500H9.500V10.500H5.500Z', '#3bc431', '#168812') + P('M9 8.500H13', 0, '#168812', 1.5), 18],
  cov: [15, T(3, 13, 'C', '#f04010', 12.5, 'stroke="#8c1c00" stroke-width="1.600" paint-order="stroke"'), 18],
  asr: [15, P('M4 14V7Q4 4.500 7 4.500Q10 4.500 10 7V14M4 10H10', 0, '#18961a', 3.4) + P('M4 13.500V7Q4 4.500 7 4.500Q10 4.500 10 7V13.500M4 10H10', 0, '#eaffea', 1.2), 18],
  plus: [17, P('M3.500 4.500H11.500V12.500H3.500Z', '#e7effc', '#2857b0') + P('M5 8.500H10M7.500 6V11', 0, '#2857b0'), 18]
};
const svg = (n) => {
  const [w, body, h] = ICONS[n];
  return `<svg width="${w}" height="${h || w}" viewBox="0 0 ${w} ${h || w}">${body}</svg>`;
};

document.querySelectorAll('[data-icon]').forEach((e) => { e.innerHTML = svg(e.dataset.icon); });
document.querySelectorAll('[data-items]').forEach((e) => {
  e.innerHTML = e.dataset.items.split(' ').map((n) => {
    if (n === '|') return '<span class="sep"></span>';
    if (n === 'grip' || n === 'group' || n === 'drop') return `<span class="${n}"></span>`;
    const on = n[0] === '*';
    return `<span class="ib${on ? ' on' : ''}">${svg(on ? n.slice(1) : n)}</span>`;
  }).join('');
});

// name | value | icon | waveform kind | expandable | start marker
const SIGNALS = [
  'b_sysclk|1|reg|clk', 'd_clk|1|reg|clk', 'sysclk|1|reg|clk', 'clk|1|net|clk||d', 'a_clk|1|net|clk||d', 'a_sysclk|1|net|clk||d',
  'b_sysclk|1|net|clk||d', 'd_clk|1|net|clk||d', 'sysclk|1|net|clk||d', 'c|x|reg|bus:0=x|+', 'rst_n|1|reg|bus:0=x,5=0,45=1|+',
  'cb.a_clk|x|reg|red', 'cb.a_sysclk|x|reg|red', 'cb.b_sysclk|x|reg|red', 'cb.c|x|reg|bus:0=x|+', 'cb.d_clk|x|reg|red', 'cb.sysclk|x|reg|red',
  'cb.rst_n|1|reg|bus:0=0,45=1|+|d', 'clk|1|net|clk||d', 'rst_n|1|net|rst', 'sysclk|1|net|clk||d', 'a_sysclk|1|net|clk||d', 'a_clk|1|net|clk||d',
  'b_sysclk|1|net|clk||d', 'c|x|net|red', 'd_clk|1|net|clk||d', 'cp_qOK||cov|cov|+', 'cp_qBUG||cov|cov|+', 'cp_qBUG2||cov|cov|+',
  'cqMatched||cov|cov|+', 'cqMatched2||cov|cov|+', 'ap_qOK||asr|asr|+', 'ap_qBUG||asr|asr|+', 'ap_qBUG2||asr|asr|+', 'aqMatched||asr|asr|+',
  'aqMatched2||asr|asr|+', 'uvm_hdl_check_path.path|{}|net|bus:0={}'
].map((s) => s.split('|'));
const tx = (t) => Math.floor(t * 16.1);
const END = 885;
const rect = (x, y, w, h, c) => `<rect x="${x}" y="${y}" width="${w}" height="${h}" fill="${c}"/>`;
const HI = '#0058ff', LO = '#00a2ff';
function trace(kind) {
  let o = '';
  if (kind === 'clk') {
    for (let t = 0; t < 55; t += 10) {
      const a = tx(t), b = Math.min(tx(t + 5), END);
      o += rect(a, 16, b - a, 1, LO);
      if (t) o += rect(a, 1, 1, 16, LO);
      if (t < 50) { const c = tx(t + 10); o += rect(b, 1, c - b + 1, 1, HI) + rect(b, 1, 1, 16, HI); }
    }
  } else if (kind === 'red' || kind === 'rst') {
    const w = kind === 'red' ? END : tx(5);
    o += rect(0, 1, w, 16, '#f00') + rect(1, 2, w - 2, 14, '#ff5c5c');
    if (kind === 'rst') o += rect(81, 16, tx(45) - 80, 1, LO) + rect(tx(45), 1, 1, 16, HI) + rect(tx(45), 1, END - tx(45), 1, HI);
  } else if (kind.startsWith('bus:')) {
    const seg = kind.slice(4).split(',').map((s) => s.split('='));
    seg.forEach(([t, v], i) => {
      const a = tx(+t), b = i + 1 < seg.length ? tx(+seg[i + 1][0]) : END + 2;
      o += rect(a + (i ? 2 : 0), 1, b - a - 2, 1, '#999') + rect(a + (i ? 2 : 0), 16, b - a - 2, 1, '#999');
      if (i) o += P(`M${a - .5} 1V5L${a + .5} 7V11L${a - .5} 13V17M${a + 1.500} 1V5L${a + .5} 7V11L${a + 1.500} 13V17`, 0, '#aaa');
      o += `<text x="${a + 2}" y="12">${v}</text>`;
    });
  } else {
    [5, 15, 25, 35, 45].forEach((t) => {
      const c = tx(t) + (t === 5 ? 0 : 1);
      o += kind === 'cov' ? P(`M${c - 3} 2.500H${c + 3}V4L${c + 1} 9.500H${c - 1}L${c - 3} 4Z`, '#d4505c') : P(`M${c} 2L${c + 3} 9H${c - 3}Z`, '#00f090');
      o += P(`M${c - 2.500} 11.500H${c + 2.500}V16H${c - 2.500}Z`, '#dde03c');
    });
  }
  return o;
}
document.getElementById('signals').innerHTML = SIGNALS.map(([n, v, ic, , ex], i) =>
  `<div class="sig${i === 26 ? ' sel' : ''}"><span>${ex ? svg('plus') : ''}</span><span>${svg(ic)}</span><span>${n}</span><span>${v}</span></div>`).join('');
document.getElementById('waves').innerHTML = SIGNALS.map(([, , , k, , d]) =>
  `<svg width="919" height="19">${trace(k)}${rect(0, 18, 919, 1, '#bdbdbd')}${d ? rect(0, 0, 2, 2, '#f00') : ''}</svg>`).join('') +
  `<svg width="919" height="4">${rect(0, 1, 885, 1, '#aaa')}</svg>`;
let r = '';
for (let t = 0; t <= 57; t++) {
  const x = tx(t);
  r += t % 2 ? rect(x, 20, 1, 3, '#444') : rect(x, 7, 1, 16, '#444') + `<text x="${x + 1}" y="14">${t}</text>`;
}
document.getElementById('ruler').innerHTML = `<svg width="934" height="23">${r}<text x="924" y="14">ns</text></svg>`;
```
